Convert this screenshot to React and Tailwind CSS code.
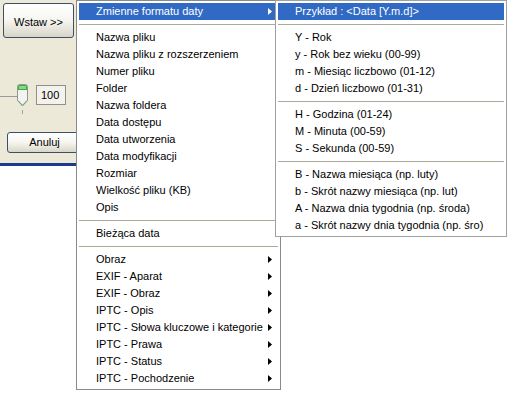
import clsx from 'clsx';

const mainItems = [
  { sep: true },
  'Nazwa pliku',
  'Nazwa pliku z rozszerzeniem',
  'Numer pliku',
  'Folder',
  'Nazwa foldera',
  'Data dostępu',
  'Data utworzenia',
  'Data modyfikacji',
  'Rozmiar',
  'Wielkość pliku (KB)',
  'Opis',
  { sep: true },
  'Bieżąca data',
  { sep: true },
  { label: 'Obraz', sub: true },
  { label: 'EXIF - Aparat', sub: true },
  { label: 'EXIF - Obraz', sub: true },
  { label: 'IPTC - Opis', sub: true },
  { label: 'IPTC - Słowa kluczowe i kategorie', sub: true },
  { label: 'IPTC - Prawa', sub: true },
  { label: 'IPTC - Status', sub: true },
  { label: 'IPTC - Pochodzenie', sub: true },
];

const dateItems = [
  { sep: true },
  'Y - Rok',
  'y - Rok bez wieku (00-99)',
  'm - Miesiąc liczbowo (01-12)',
  'd - Dzień liczbowo (01-31)',
  { sep: true },
  'H - Godzina (01-24)',
  'M - Minuta (00-59)',
  'S - Sekunda (00-59)',
  { sep: true },
  'B - Nazwa miesiąca (np. luty)',
  'b - Skrót nazwy miesiąca (np. lut)',
  'A - Nazwa dnia tygodnia (np. środa)',
  'a - Skrót nazwy dnia tygodnia (np. śro)',
];

function Arrow({ white }) {
  return (
    <svg width="4" height="7" viewBox="0 0 4 7" className="shrink-0">
      <path d="M0 0L4 3.5L0 7Z" fill={white ? '#fff' : '#000'} />
    </svg>
  );
}

function Item({ label, active, sub }) {
  return (
    <div
      className={clsx(
        'flex h-[17px] items-center pl-[17px] pr-[6px] leading-[17px]',
        active ? 'bg-[#316ac5] text-white' : 'text-black'
      )}
    >
      <span className="flex-1 whitespace-nowrap">{label}</span>
      {sub && <Arrow white={active} />}
    </div>
  );
}

function Sep() {
  return (
    <div className="flex h-[9px] items-center">
      <div className="h-px w-full bg-[#aca899]" />
    </div>
  );
}

function MenuList({ items }) {
  return items.map((it, i) => {
    if (typeof it === 'string') return <Item key={i} label={it} />;
    if (it.sep) return <Sep key={i} />;
    return <Item key={i} label={it.label} sub={it.sub} />;
  });
}

function XpButton({ children, className }) {
  return (
    <div
      className={clsx(
        'flex items-center justify-center rounded-[3px] border border-[#3d4f66] bg-linear-to-b from-white via-[#f6f5f0] to-[#d9d5c8] text-black',
        className
      )}
    >
      {children}
    </div>
  );
}

function Thumb() {
  return (
    <svg width="11" height="30" viewBox="0 0 11 30" className="shrink-0">
      <path d="M0.5 2.5Q0.5 0.5 2.5 0.5H8.5Q10.5 0.5 10.5 2.5V16.5L5.5 22L0.5 16.5Z" fill="#f3f3ef" stroke="#8b9a8b" />
      <path d="M1 2.5Q1 1 2.5 1H8.5Q10 1 10 2.5V6H1Z" fill="#3fae3f" />
      <path d="M2 3Q2 2 3 2H8Q9 2 9 3V5H2Z" fill="#8ad58a" />
      <path d="M1 16.5L5.5 21.3L10 16.5" fill="none" stroke="#6f9c6f" />
      <rect x="5" y="26" width="1" height="4" fill="#a0a0a0" />
    </svg>
  );
}

export default function App() {
  return (
    <div className="relative h-[393px] w-[507px] overflow-hidden bg-white text-[11px] [font-family:'Liberation_Sans',Arial,sans-serif]">
      <div className="flex h-full w-[76px] flex-col">
        <div className="h-[163px] bg-[#ece9d8]">
          <XpButton className="ml-[3px] mt-[3px] h-[35px] w-[71px] pt-[3px]">Wstaw &gt;&gt;</XpButton>
          <div className="mt-[46px] flex items-start">
            <div className="mt-[12px] h-px w-[17px] bg-[#9a9a9a]" />
            <Thumb />
            <div className="ml-[8px] mt-px flex h-[20px] w-[30px] items-center border border-[#8f8f8f] bg-[#f3f2ec] pl-[4px]">
              100
            </div>
          </div>
          <XpButton className="ml-[7px] mt-[18px] h-[21px] w-[75px]">Anuluj</XpButton>
        </div>
        <div className="h-[3px] bg-[#1a3b8e]" />
        <div className="flex-1 bg-white" />
      </div>

      <div className="absolute left-[76px] top-0 w-[205px] border border-[#8a8a8a] bg-white p-[2px]">
        <Item label="Zmienne formatu daty" active sub />
        <MenuList items={mainItems} />
      </div>

      <div className="absolute left-[275px] top-0 w-[232px] border border-[#a0a0a0] bg-white p-[2px]">
        <Item label="Przykład : <Data [Y.m.d]>" active />
        <MenuList items={dateItems} />
      </div>
    </div>
  );
}
